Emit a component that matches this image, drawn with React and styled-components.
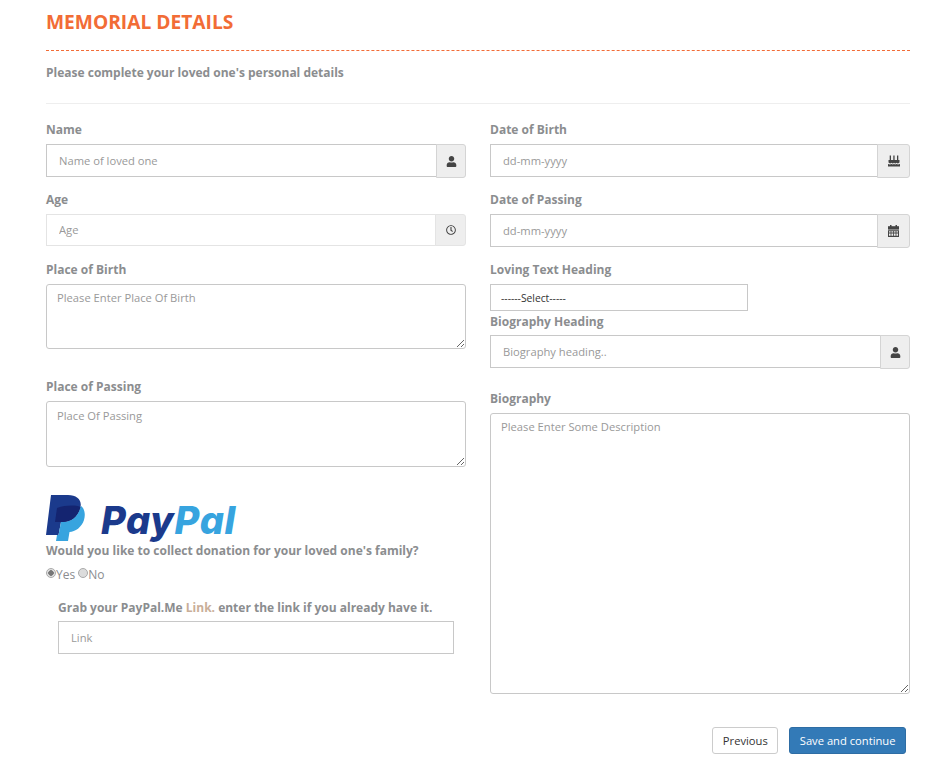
import React from 'react'
import styled, {createGlobalStyle} from 'styled-components'
import {FaUser, FaRegClock} from 'react-icons/fa'

const colors = {
  orange: '#f26c36',
  label: '#8b8d8f',
  placeholder: '#999999',
  border: '#c8c8c8',
  addon: '#eeeeee',
  icon: '#444444',
}

const GlobalStyle = createGlobalStyle`
  * { box-sizing: border-box; }
  body {
    margin: 0;
    background: #fff;
    font-family: "Open Sans", sans-serif;
  }
  ::placeholder { color: ${colors.placeholder}; opacity: 1; }
`

const Page = styled.div`
  width: 952px;
  height: 762px;
  padding: 0 42px 0 46px;
  overflow: hidden;
`

const Title = styled.h2`
  margin: 0;
  padding-top: 8px;
  height: 51px;
  border-bottom: 1px dashed ${colors.orange};
  font-size: 19.2px;
  line-height: 27px;
  font-weight: 700;
  color: ${colors.orange};
`

const Subtitle = styled.p`
  margin: 0;
  height: 53px;
  padding-top: 13px;
  border-bottom: 1px solid #eeeeee;
  font-size: 12px;
  line-height: 18px;
  font-weight: 700;
  color: ${colors.label};
`

const Columns = styled.div`
  display: grid;
  grid-template-columns: 420px 420px;
  column-gap: 24px;
  padding-top: 16px;
`

const Column = styled.div`
  display: flex;
  flex-direction: column;
`

const Field = styled.div`
  height: ${p => p.$height}px;
  margin-left: ${p => p.$indent || 0}px;
  margin-right: ${p => p.$indent || 0}px;
`

const Label = styled.label`
  display: block;
  height: 18px;
  margin-bottom: ${p => p.$gap ?? 6}px;
  font-size: 12px;
  line-height: 20px;
  font-weight: 700;
  color: ${colors.label};
`

const InputGroup = styled.div`
  display: flex;
  align-items: flex-start;
`

const TextInput = styled.input`
  display: block;
  flex: 1;
  min-width: 0;
  width: 100%;
  height: ${p => p.$height || 33}px;
  padding: 0 12px ${p => p.$soft ? 1 : 0}px;
  border: 1px solid ${p => p.$soft ? '#e4e4e4' : colors.border};
  border-radius: 0;
  outline: none;
  background: #fff;
  font-family: "Open Sans", sans-serif;
  font-size: 11.2px;
`

const Addon = styled.span`
  display: flex;
  align-items: center;
  justify-content: center;
  flex: none;
  width: ${p => p.$width || 33}px;
  height: ${p => p.$height || 34}px;
  margin-left: -1px;
  border: 1px solid ${p => p.$soft ? '#e4e4e4' : '#d4d4d4'};
  border-radius: 0 3px 3px 0;
  background: ${colors.addon};
  color: ${colors.icon};
  font-size: ${p => p.$icon || 11}px;
`

const TextArea = styled.textarea`
  display: block;
  width: 100%;
  height: ${p => p.$height}px;
  padding: ${p => p.$top || 5}px 10px 5px;
  border: 1px solid ${colors.border};
  border-radius: 3px;
  outline: none;
  font-family: "Open Sans", sans-serif;
  font-size: 11.2px;
  line-height: 16px;
`

const Select = styled.select`
  display: block;
  width: 258px;
  height: 27px;
  padding: 0 10px;
  border: 1px solid ${colors.border};
  border-radius: 0;
  outline: none;
  appearance: none;
  background: #fff;
  font-family: "Open Sans", sans-serif;
  font-size: 10.3px;
  color: #333;
`

const Logo = styled.div`
  display: flex;
  align-items: flex-start;
  height: 46px;
  margin-top: 10px;
`

const LogoMark = styled.svg`
  display: block;
  flex: none;
  width: 39px;
  height: 46px;
`

const LogoWord = styled.span`
  margin-left: 16px;
  font-family: Inter, sans-serif;
  font-size: 38px;
  line-height: 50px;
  font-weight: 800;
  font-style: italic;
  letter-spacing: 0.7px;
  color: #1b3a8c;
`

const LogoWordLight = styled.span`
  color: #37a4df;
`

const Question = styled.p`
  margin: 1px 0 0;
  height: 18px;
  font-size: 12px;
  line-height: 18px;
  font-weight: 700;
  color: ${colors.label};
`

const RadioRow = styled.div`
  display: flex;
  align-items: center;
  height: 18px;
  margin-top: 5px;
  margin-bottom: 15px;
  font-size: 12px;
  color: ${colors.label};
`

const Radio = styled.input`
  appearance: none;
  flex: none;
  width: 10px;
  height: 10px;
  margin: 0 0 2px;
  border: 1px solid #aaa;
  border-radius: 50%;
  background: #dcdcdc;

  &:checked {
    background: radial-gradient(circle, #777 0 2.5px, #e2e2e2 3px);
  }
`

const RadioText = styled.span`
  margin-right: 3px;
`

const GrabText = styled.span`
  color: #c9ae98;
`

const Actions = styled.div`
  display: flex;
  justify-content: flex-end;
  gap: 11px;
  padding-right: 4px;
  margin-top: 33px;
`

const Button = styled.button`
  height: 27px;
  padding: 0 9.5px;
  border: 1px solid ${p => p.$primary ? '#2e6da4' : '#ccc'};
  border-radius: 3px;
  background: ${p => p.$primary ? '#337ab7' : '#fff'};
  color: ${p => p.$primary ? '#fff' : '#333'};
  font-family: "Open Sans", sans-serif;
  font-size: 11.2px;
`

const CakeIcon = () => (
  <svg width="12" height="12" viewBox="0 0 12 12" fill="currentColor">
    <rect x="1.7" y="0.5" width="1.3" height="4.5" />
    <rect x="5.3" y="0.5" width="1.3" height="4.5" />
    <rect x="9" y="0.5" width="1.3" height="4.5" />
    <path d="M0.5 5 H11.5 V7.6 C10.5 8.6 9.5 8.6 8.6 7.8 C7.7 8.6 6.8 8.6 6 7.8 C5.2 8.6 4.3 8.6 3.4 7.8 C2.5 8.6 1.5 8.6 0.5 7.6 Z" />
    <path d="M0 9 C1.4 9.6 2.6 9.6 3.4 9 C4.3 9.6 5.2 9.6 6 9 C6.8 9.6 7.7 9.6 8.6 9 C9.4 9.6 10.6 9.6 12 9 V11.5 H0 Z" />
  </svg>
)

const CalendarIcon = () => (
  <svg width="11" height="12" viewBox="0 0 11 12" fill="currentColor">
    <rect x="2" y="0" width="1.5" height="2" />
    <rect x="7.5" y="0" width="1.5" height="2" />
    <path d="M0 1.2 H11 V4.6 H0 Z" />
    <path fillRule="evenodd" d="M0 5.2 H11 V12 H0 Z M1 6.2 V7.6 H2.6 V6.2 Z M3.4 6.2 V7.6 H5.1 V6.2 Z M5.9 6.2 V7.6 H7.6 V6.2 Z M8.4 6.2 V7.6 H10 V6.2 Z M1 8.5 V10.8 H2.6 V8.5 Z M3.4 8.5 V10.8 H5.1 V8.5 Z M5.9 8.5 V10.8 H7.6 V8.5 Z M8.4 8.5 V10.8 H10 V8.5 Z" />
  </svg>
)

export default function App() {
  return (
    <Page>
      <GlobalStyle />
      <Title>MEMORIAL DETAILS</Title>
      <Subtitle>Please complete your loved one's personal details</Subtitle>
      <Columns>
        <Column>
          <Field $height={70}>
            <Label>Name</Label>
            <InputGroup>
              <TextInput placeholder="Name of loved one" />
              <Addon $width={30}><FaUser /></Addon>
            </InputGroup>
          </Field>
          <Field $height={70}>
            <Label>Age</Label>
            <InputGroup>
              <TextInput $soft $height={32} placeholder="Age" />
              <Addon $soft $width={31} $height={32} $icon={10}><FaRegClock /></Addon>
            </InputGroup>
          </Field>
          <Field $height={117}>
            <Label>Place of Birth</Label>
            <TextArea $height={65} placeholder="Please Enter Place Of Birth" />
          </Field>
          <Field $height={108}>
            <Label>Place of Passing</Label>
            <TextArea $height={66} $top={6} placeholder="Place Of Passing" />
          </Field>
          <Logo>
            <LogoMark viewBox="0 0 39 46">
              <path fill="#1b3a8c" d="M5 0 H22 C31 0 36 5 34.5 12 C32 22 25 27 17 27 H15 L12.5 40 H0 Z" />
              <path fill="#37a4df" d="M35 11 C39 14 39.5 20 38 25 C36 32 29 37 23.5 37 L22 46 H10 L11 40 H12.5 L15 27 H17 C25 27 32 22 34.5 12 Z" />
              <path fill="#142470" d="M11 13 C20 10 29 10 34.5 12 C32 22 25 27 17 27 H9 Z" />
            </LogoMark>
            <LogoWord>Pay<LogoWordLight>Pal</LogoWordLight></LogoWord>
          </Logo>
          <Question>Would you like to collect donation for your loved one's family?</Question>
          <RadioRow>
            <Radio type="radio" name="donate" defaultChecked />
            <RadioText>Yes</RadioText>
            <Radio type="radio" name="donate" />
            <RadioText>No</RadioText>
          </RadioRow>
          <Field $indent={12} $height={60}>
            <Label $gap={5}>
              <Question as="span">Grab your PayPal.Me <GrabText>Link.</GrabText> enter the link if you already have it.</Question>
            </Label>
            <TextInput placeholder="Link" />
          </Field>
        </Column>
        <Column>
          <Field $height={70}>
            <Label>Date of Birth</Label>
            <InputGroup>
              <TextInput placeholder="dd-mm-yyyy" />
              <Addon><CakeIcon /></Addon>
            </InputGroup>
          </Field>
          <Field $height={70}>
            <Label>Date of Passing</Label>
            <InputGroup>
              <TextInput placeholder="dd-mm-yyyy" />
              <Addon><CalendarIcon /></Addon>
            </InputGroup>
          </Field>
          <Field $height={52}>
            <Label>Loving Text Heading</Label>
            <Select defaultValue="">
              <option value="">------Select-----</option>
            </Select>
          </Field>
          <Field $height={77}>
            <Label $gap={5}>Biography Heading</Label>
            <InputGroup>
              <TextInput placeholder="Biography heading.." />
              <Addon $width={30}><FaUser /></Addon>
            </InputGroup>
          </Field>
          <Field $height={305}>
            <Label>Biography</Label>
            <TextArea $height={281} placeholder="Please Enter Some Description" />
          </Field>
        </Column>
      </Columns>
      <Actions>
        <Button>Previous</Button>
        <Button $primary>Save and continue</Button>
      </Actions>
    </Page>
  )
}
